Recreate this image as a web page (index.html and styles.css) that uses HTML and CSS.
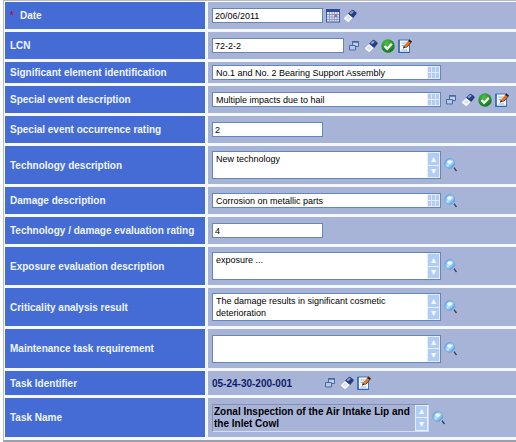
FILE: index.html
```html
<!DOCTYPE html>
<html lang="en">
<head>
    <meta charset="UTF-8">
    <meta name="viewport" content="width=device-width, initial-scale=1.0">
    <title>Event Evaluation</title>
    <link rel="stylesheet" href="styles.css">
</head>
<body>
    <!-- Icon shapes -->
    <svg class="sprites" aria-hidden="true">
        <defs>
            <linearGradient id="lensFill" x1="0" y1="0" x2="1" y2="1">
                <stop offset="0" stop-color="#4fa3ea"/>
                <stop offset="0.5" stop-color="#b9e4ff"/>
                <stop offset="1" stop-color="#2f7dd0"/>
            </linearGradient>
            <radialGradient id="okFill" cx="0.4" cy="0.3" r="0.8">
                <stop offset="0" stop-color="#4fc04a"/>
                <stop offset="1" stop-color="#0a6d14"/>
            </radialGradient>
        </defs>
        <symbol id="calendar" viewBox="0 0 14 14">
            <rect x="0.5" y="0.5" width="13" height="12.5" fill="#dfe4f5" stroke="#41599f"/>
            <rect x="0" y="0" width="14" height="3" fill="#2f4a96"/>
            <path d="M1 5.5h12M1 8h12M1 10.5h12M3.5 3v10M6 3v10M8.5 3v10M11 3v10" stroke="#7f8fc4" stroke-width="0.8"/>
            <path d="M8.5 5.500h2.500v2.500h-2.500z" fill="#d6604f"/>
        </symbol>
        <symbol id="eraser" viewBox="0 0 14 14">
            <path d="M.8 8.500l4.500-4 5 4-4 4.500q-1 .8-2 0l-3.300-2.500q-.8-1-.2-2z" fill="#f4f8ff" stroke="#8fa3cb" stroke-width="0.6"/>
            <path d="M5 4.700l3.600-3.500q1-.7 2 0l2.600 2q.9 1 0 2l-3 3.700z" fill="#253f80"/>
            <path d="M6.500 4l2.800-2.300 1.600 1-2.700 2.600z" fill="#8ea5d6"/>
            <path d="M3 8.800l2-2 2.500 1.900-2 2.300z" fill="#d3e2f6"/>
        </symbol>
        <symbol id="windows" viewBox="0 0 14 14">
            <path d="M5.500 2.500h6v5h-6z" fill="#c3d0eb" stroke="#486a9f"/>
            <path d="M5 3h7" stroke="#486a9f" stroke-width="1.5"/>
            <path d="M2.500 6.500h6v4.500h-6z" fill="#b7c6e6" stroke="#486a9f"/>
        </symbol>
        <symbol id="ok" viewBox="0 0 14 14">
            <circle cx="7" cy="7" r="6.7" fill="url(#okFill)"/>
            <path d="M3.500 7l2.700 2.800 4.600-5" fill="none" stroke="#fff" stroke-width="2.2"/>
        </symbol>
        <symbol id="edit" viewBox="0 0 14 14">
            <rect x="1" y="1" width="10.5" height="12.5" fill="#f5faff" stroke="#3f76b8"/>
            <path d="M1 1v12.500h10.500" fill="none" stroke="#2c65ae" stroke-width="1.4"/>
            <path d="M3.500 4h4M3.500 6.500h3M3.500 11h5.500" stroke="#8fb5de"/>
            <path d="M5 9.500l1-3 4.500-5 2.500 2-4.500 5z" fill="#e27a2c"/>
            <path d="M10 2l1.500-1.500 2.500 2-1.200 1.500zM5 9.500l.8-2.500 2 1.600z" fill="#33231f"/>
            <path d="M8.500 8.500l4.500-5" stroke="#7a3515"/>
        </symbol>
        <symbol id="search" viewBox="0 0 14 14">
            <path d="M8.500 8.500l4 4.300" stroke="#e3e9f6" stroke-width="2.4"/>
            <path d="M9.800 9.500l2.700 3.500" stroke="#3d4670" stroke-width="1.8"/>
            <circle cx="5.7" cy="5.5" r="4.8" fill="url(#lensFill)" stroke="#4b93d8" stroke-width="0.6"/>
            <ellipse cx="5.500" cy="4" rx="2.3" ry="1.8" fill="#f2fcff"/>
        </symbol>
    </svg>

    <form>
        <table class="sheet">
            <tr>
                <th scope="row"><label for="date"><span class="required">*</span>Date</label></th>
                <td><div class="field">
                    <input class="short" id="date" type="text" value="20/06/2011">
                    <button type="button" class="icon" aria-label="Calendar"><svg><use href="#calendar"/></svg></button>
                    <button type="button" class="icon" aria-label="Clear"><svg><use href="#eraser"/></svg></button>
                </div></td>
            </tr>
            <tr>
                <th scope="row"><label for="lcn">LCN</label></th>
                <td><div class="field">
                    <input class="medium" id="lcn" type="text" value="72-2-2">
                    <button type="button" class="icon" aria-label="Open"><svg><use href="#windows"/></svg></button>
                    <button type="button" class="icon" aria-label="Clear"><svg><use href="#eraser"/></svg></button>
                    <button type="button" class="icon" aria-label="Validate"><svg><use href="#ok"/></svg></button>
                    <button type="button" class="icon" aria-label="Edit"><svg><use href="#edit"/></svg></button>
                </div></td>
            </tr>
            <tr class="slim">
                <th scope="row"><label for="element">Significant element identification</label></th>
                <td><div class="field">
                    <div class="memo line">
                        <textarea id="element" rows="1">No.1 and No. 2 Bearing Support Assembly</textarea>
                        <div class="scroll"><button type="button" aria-label="Up"></button><button type="button" aria-label="Down"></button></div>
                    </div>
                </div></td>
            </tr>
            <tr>
                <th scope="row"><label for="event">Special event description</label></th>
                <td><div class="field">
                    <div class="memo line">
                        <textarea id="event" rows="1">Multiple impacts due to hail</textarea>
                        <div class="scroll"><button type="button" aria-label="Up"></button><button type="button" aria-label="Down"></button></div>
                    </div>
                    <button type="button" class="icon" aria-label="Open"><svg><use href="#windows"/></svg></button>
                    <button type="button" class="icon" aria-label="Clear"><svg><use href="#eraser"/></svg></button>
                    <button type="button" class="icon" aria-label="Validate"><svg><use href="#ok"/></svg></button>
                    <button type="button" class="icon" aria-label="Edit"><svg><use href="#edit"/></svg></button>
                </div></td>
            </tr>
            <tr>
                <th scope="row"><label for="occurrence">Special event occurrence rating</label></th>
                <td><div class="field">
                    <input class="short" id="occurrence" type="text" value="2">
                </div></td>
            </tr>
            <tr class="tall">
                <th scope="row"><label for="technology">Technology description</label></th>
                <td><div class="field">
                    <div class="memo">
                        <textarea id="technology" rows="2">New technology</textarea>
                        <div class="scroll"><button type="button" aria-label="Up">▴</button><button type="button" aria-label="Down">▾</button></div>
                    </div>
                    <button type="button" class="icon" aria-label="Search"><svg><use href="#search"/></svg></button>
                </div></td>
            </tr>
            <tr>
                <th scope="row"><label for="damage">Damage description</label></th>
                <td><div class="field">
                    <div class="memo line">
                        <textarea id="damage" rows="1">Corrosion on metallic parts</textarea>
                        <div class="scroll"><button type="button" aria-label="Up"></button><button type="button" aria-label="Down"></button></div>
                    </div>
                    <button type="button" class="icon" aria-label="Search"><svg><use href="#search"/></svg></button>
                </div></td>
            </tr>
            <tr>
                <th scope="row"><label for="rating">Technology / damage evaluation rating</label></th>
                <td><div class="field">
                    <input class="short" id="rating" type="text" value="4">
                </div></td>
            </tr>
            <tr class="tall">
                <th scope="row"><label for="exposure">Exposure evaluation description</label></th>
                <td><div class="field">
                    <div class="memo">
                        <textarea id="exposure" rows="2">exposure ...</textarea>
                        <div class="scroll"><button type="button" aria-label="Up">▴</button><button type="button" aria-label="Down">▾</button></div>
                    </div>
                    <button type="button" class="icon" aria-label="Search"><svg><use href="#search"/></svg></button>
                </div></td>
            </tr>
            <tr class="tall">
                <th scope="row"><label for="criticality">Criticality analysis result</label></th>
                <td><div class="field">
                    <div class="memo">
                        <textarea id="criticality" rows="2">The damage results in significant cosmetic deterioration</textarea>
                        <div class="scroll"><button type="button" aria-label="Up">▴</button><button type="button" aria-label="Down">▾</button></div>
                    </div>
                    <button type="button" class="icon" aria-label="Search"><svg><use href="#search"/></svg></button>
                </div></td>
            </tr>
            <tr class="task">
                <th scope="row"><label for="maintenance">Maintenance task requirement</label></th>
                <td><div class="field">
                    <div class="memo">
                        <textarea id="maintenance" rows="2"></textarea>
                        <div class="scroll"><button type="button" aria-label="Up">▴</button><button type="button" aria-label="Down">▾</button></div>
                    </div>
                    <button type="button" class="icon" aria-label="Search"><svg><use href="#search"/></svg></button>
                </div></td>
            </tr>
            <tr class="compact">
                <th scope="row">Task Identifier</th>
                <td><div class="field">
                    <span class="task-id">05-24-30-200-001</span>
                    <button type="button" class="icon" aria-label="Open"><svg><use href="#windows"/></svg></button>
                    <button type="button" class="icon" aria-label="Clear"><svg><use href="#eraser"/></svg></button>
                    <button type="button" class="icon" aria-label="Edit"><svg><use href="#edit"/></svg></button>
                </div></td>
            </tr>
            <tr class="task">
                <th scope="row"><label for="taskName">Task Name</label></th>
                <td><div class="field">
                    <div class="memo locked">
                        <textarea id="taskName" rows="2" readonly>Zonal Inspection of the Air Intake Lip and the Inlet Cowl</textarea>
                        <div class="scroll"><button type="button" aria-label="Up">▴</button><button type="button" aria-label="Down">▾</button></div>
                    </div>
                    <button type="button" class="icon" aria-label="Search"><svg><use href="#search"/></svg></button>
                </div></td>
            </tr>
        </table>
    </form>
</body>
</html>
```
FILE: styles.css
```css
* {
    box-sizing: border-box;
}
body {
    margin: 0;
    padding-left: 3px;
    background: #fff;
    font-family: "Liberation Sans", Arial, sans-serif;
    font-size: 10px;
}
.sprites {
    display: block;
    width: 0;
    height: 0;
}
form {
    padding: 1px 0 0 1px;
    border-left: 1px solid #b4bccb;
    border-top: 1px solid #b4bccb;
    border-bottom: 2px solid #9b9fae;
}
.sheet {
    width: 100%;
    border-collapse: separate;
    border-spacing: 0;
}
th, td {
    height: 30px;
    padding: 0 4px;
    border-bottom: 3px solid #f4f9ff;
}
th {
    width: 203px;
    padding-left: 5px;
    border-right: 3px solid #f4f9ff;
    background-color: #446cd4;
    color: #eef5ff;
    font-weight: bold;
    text-align: left;
    white-space: nowrap;
}
td {
    background-color: #a7b4d7;
}
.slim th, .slim td {
    height: 24px;
}
.compact th, .compact td {
    height: 27px;
}
.tall th, .tall td {
    height: 41px;
}
.task th, .task td {
    height: 42px;
}
.required {
    margin-right: 6px;
    color: #b0105c;
}
.field {
    display: flex;
    align-items: center;
    gap: 3px;
}
input, textarea {
    margin: 0;
    border: 0;
    border-radius: 0;
    background: #fff;
    color: #000;
    font-family: inherit;
    font-size: 9px;
    line-height: 12px;
    outline: none;
}
input {
    height: 15px;
    padding: 0 2px;
    border: 1px solid #6587b8;
}
.short {
    width: 111px;
}
.medium {
    width: 132px;
}
.memo {
    display: flex;
    width: 229px;
    height: 28px;
    border: 1px solid #6587b8;
    background: #fff;
}
.memo.line {
    height: 15px;
}
textarea {
    flex: 1;
    min-width: 0;
    padding: 1px 0 0 3px;
    resize: none;
    overflow: hidden;
}
.scroll {
    display: flex;
    flex-direction: column;
    gap: 1px;
    width: 13px;
    padding: 1px;
    background: #e6eefa;
}
.scroll button {
    flex: 1;
    min-height: 0;
    padding: 0;
    border: 0;
    background: #b2cdf5;
    color: #f6faff;
    font-size: 10px;
    line-height: 10px;
}
.line .scroll button {
    background: repeating-linear-gradient(90deg, #b2cdf5 0, #b2cdf5 3px, #dce8fa 3px, #dce8fa 4px);
}
.locked {
    width: 217px;
    border-color: #8490ae #d6dceb #d6dceb #8490ae;
    background: #a7b4d7;
}
.locked textarea {
    padding-left: 1px;
    background: #a7b4d7;
    font-size: 10px;
    font-weight: bold;
}
.icon {
    display: block;
    width: 14px;
    height: 14px;
    padding: 0;
    border: 0;
    background: none;
    cursor: pointer;
}
.icon svg {
    display: block;
    width: 14px;
    height: 14px;
}
.task-id {
    width: 108px;
    color: #101a6b;
    font-weight: bold;
}
```
